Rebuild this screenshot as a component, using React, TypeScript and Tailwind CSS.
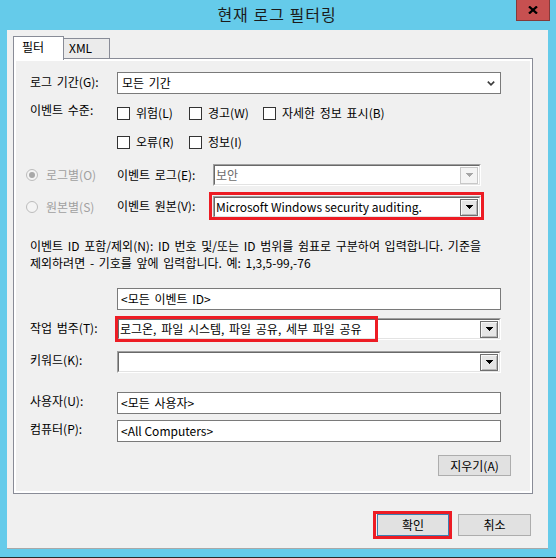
import React from "react";

function Arrow({ disabled }: { disabled?: boolean }) {
  return (
    <svg width="7" height="4" viewBox="0 0 7 4" shapeRendering="crispEdges">
      <polygon points="0,0 7,0 4,4 3,4" fill={disabled ? "#a6a6a6" : "#000"} />
    </svg>
  );
}

function DropBtn({ disabled }: { disabled?: boolean }) {
  return disabled ? (
    <div className="w-[18px] h-[17px] mr-[1px] border border-[#c8c8c8] bg-[#f4f4f4] flex items-center justify-center">
      <Arrow disabled />
    </div>
  ) : (
    <div className="w-[18px] h-[17px] mr-[1px] border border-[#6f6f6f] bg-[#e6e6e6] flex items-center justify-center shadow-[inset_1px_1px_0_#f8f8f8,inset_-1px_-1px_0_#b8b8b8]">
      <Arrow />
    </div>
  );
}

function Combo3D({
  children,
  disabled,
  className,
}: {
  children?: React.ReactNode;
  disabled?: boolean;
  className?: string;
}) {
  return (
    <div
      className={
        "h-[22px] flex border border-t-[#a0a0a0] border-l-[#a0a0a0] border-b-white border-r-white " +
        (className || "")
      }
    >
      <div className="flex-1 flex items-center bg-white border border-t-[#696969] border-l-[#696969] border-b-[#e3e3e3] border-r-[#e3e3e3]">
        <div
          className={
            "flex-1 pl-[1px] whitespace-nowrap overflow-hidden " +
            (disabled ? "text-[#6d6d6d]" : "text-black")
          }
        >
          {children}
        </div>
        <DropBtn disabled={disabled} />
      </div>
    </div>
  );
}

function TextBox({ children }: { children?: React.ReactNode }) {
  return (
    <div className="w-[384px] h-[22px] border border-[#7a7a7a] bg-white flex items-center pl-[3px] whitespace-nowrap">
      {children}
    </div>
  );
}

function Check({ label }: { label: string }) {
  return (
    <div className="flex items-center gap-[6px]">
      <span className="w-[13px] h-[13px] border border-[#333333] bg-white" />
      <span>{label}</span>
    </div>
  );
}

function Radio({ checked }: { checked?: boolean }) {
  return (
    <span className="w-[12px] h-[12px] rounded-full border border-[#bcbcbc] bg-[#f4f4f4] flex items-center justify-center">
      {checked && <span className="w-[6px] h-[6px] rounded-full bg-[#a8a8a8]" />}
    </span>
  );
}

export default function App() {
  return (
    <div className="w-[556px] h-[558px] bg-[#65cbea] flex flex-col font-['Noto_Sans_CJK_KR',sans-serif] text-[12px] leading-[16px] text-black border-b border-[#2b2b2b] [word-spacing:2px]">
      {/* Title bar */}
      <div className="relative h-[30px] flex items-center justify-center">
        <span className="text-[16px] leading-[20px] tracking-[1px] text-[#1b1b1b] mt-[-3px] ml-[-2px] [word-spacing:0px]">
          현재 로그 필터링
        </span>
        <div className="absolute right-[6px] top-0 w-[34px] h-[21px] bg-[#c75050] border border-t-0 border-[#843a3a] flex items-center justify-center">
          <svg width="10" height="8" viewBox="0 0 10 8">
            <path d="M1 0.5 L9 7.5 M9 0.5 L1 7.5" stroke="#000" strokeWidth="2.3" />
          </svg>
        </div>
      </div>

      {/* Client */}
      <div className="ml-[7px] w-[541px] h-[519px] bg-[#f0f0f0] flex flex-col border-b border-[#a8a8a8]">
        {/* Tabs */}
        <div className="h-[28px] pt-[6px] pl-[6px] flex items-end">
          <div className="relative z-10 w-[51px] h-[24px] mb-[-2px] bg-white border border-b-0 border-[#898c97] pl-[8px] pt-[2px]">
            필터
          </div>
          <div className="w-[46px] h-[20px] bg-[#ebebeb] border border-l-0 border-b-0 border-[#898c97] pl-[5px] pt-[1px]">
            XML
          </div>
        </div>

        {/* Panel */}
        <div className="ml-[6px] w-[520px] h-[436px] border border-[#898c97]">
          <div className="h-full border-2 border-white flex flex-col pl-[14px] pt-[11px]">
            {/* 로그 기간 */}
            <div className="flex items-center h-[22px]">
              <div className="w-[87px] mb-[3px]">로그 기간(G):</div>
              <div className="w-[384px] h-[22px] border border-[#7a7a7a] bg-white flex items-center pl-[4px] pr-[5px]">
                <span className="flex-1">모든 기간</span>
                <svg width="8" height="5" viewBox="0 0 8 5">
                  <path d="M0.8 0.6 L4 3.8 L7.2 0.6" stroke="#3c3c3c" strokeWidth="1.6" fill="none" />
                </svg>
              </div>
            </div>

            {/* 이벤트 수준 */}
            <div className="flex items-start mt-[8px]">
              <div className="w-[87px]">이벤트 수준:</div>
              <div className="grid grid-cols-[72px_74px_auto] gap-y-[7px]">
                <div className="h-[22px] flex items-center"><Check label="위험(L)" /></div>
                <div className="h-[22px] flex items-center"><Check label="경고(W)" /></div>
                <div className="h-[22px] flex items-center"><Check label="자세한 정보 표시(B)" /></div>
                <div className="h-[22px] flex items-center"><Check label="오류(R)" /></div>
                <div className="h-[22px] flex items-center"><Check label="정보(I)" /></div>
              </div>
            </div>

            {/* 로그별 */}
            <div className="flex items-center h-[22px] mt-[11px] ml-[-4px]">
              <div className="w-[91px] flex items-center gap-[8px] text-[#a0a0a0]">
                <Radio checked />
                <span>로그별(O)</span>
              </div>
              <div className="w-[96px]">이벤트 로그(E):</div>
              <Combo3D disabled className="w-[268px]">보안</Combo3D>
            </div>

            {/* 원본별 */}
            <div className="flex items-center h-[22px] mt-[10px] ml-[-4px]">
              <div className="w-[91px] flex items-center gap-[8px] text-[#a0a0a0]">
                <Radio />
                <span>원본별(S)</span>
              </div>
              <div className="w-[96px] mb-[3px]">이벤트 원본(V):</div>
              <div className="relative [word-spacing:0px]">
                <Combo3D className="w-[268px]">Microsoft Windows security auditing.</Combo3D>
                <div className="absolute left-[-4px] top-[-4px] w-[275px] h-[28px] border-[3px] border-[#ed1c24]" />
              </div>
            </div>

            {/* Description */}
            <div className="mt-[19px] leading-[17px] whitespace-nowrap">
              이벤트 ID 포함/제외(N): ID 번호 및/또는 ID 범위를 쉼표로 구분하여 입력합니다. 기준을
              <br />
              제외하려면 - 기호를 앞에 입력합니다. 예: 1,3,5-99,-76
            </div>

            {/* ID input */}
            <div className="flex items-center mt-[17px]">
              <div className="w-[87px]" />
              <TextBox>&lt;모든 이벤트 ID&gt;</TextBox>
            </div>

            {/* 작업 범주 */}
            <div className="flex items-center mt-[8px]">
              <div className="w-[87px] mb-[3px]">작업 범주(T):</div>
              <div className="relative">
                <Combo3D className="w-[384px]">로그온, 파일 시스템, 파일 공유, 세부 파일 공유</Combo3D>
                <div className="absolute left-[-2px] top-[-2px] w-[263px] h-[26px] border-[3px] border-[#ed1c24]" />
              </div>
            </div>

            {/* 키워드 */}
            <div className="flex items-center mt-[11px]">
              <div className="w-[87px] mb-[4px]">키워드(K):</div>
              <Combo3D className="w-[384px]" />
            </div>

            {/* 사용자 */}
            <div className="flex items-center mt-[19px]">
              <div className="w-[87px] mb-[5px]">사용자(U):</div>
              <TextBox>&lt;모든 사용자&gt;</TextBox>
            </div>

            {/* 컴퓨터 */}
            <div className="flex items-center mt-[6px]">
              <div className="w-[87px] mb-[5px]">컴퓨터(P):</div>
              <div className="[word-spacing:0px]">
                <TextBox>&lt;All Computers&gt;</TextBox>
              </div>
            </div>

            {/* 지우기 */}
            <div className="flex justify-end pr-[19px] mt-[13px]">
              <div className="w-[73px] h-[21px] bg-[#e1e1e1] border border-[#adadad] flex items-center justify-center">
                지우기(A)
              </div>
            </div>
          </div>
        </div>

        {/* Bottom buttons */}
        <div className="flex justify-end gap-[9px] pr-[17px] mt-[20px]">
          <div className="relative">
            <div className="w-[72px] h-[22px] bg-[#e1e1e1] border border-[#3c7fb1] flex items-center justify-center">
              확인
            </div>
            <div className="absolute left-[-4px] top-[-3px] w-[79px] h-[28px] border-[3px] border-[#ed1c24]" />
          </div>
          <div className="w-[73px] h-[22px] bg-[#e1e1e1] border border-[#adadad] flex items-center justify-center">
            취소
          </div>
        </div>
      </div>
    </div>
  );
}
